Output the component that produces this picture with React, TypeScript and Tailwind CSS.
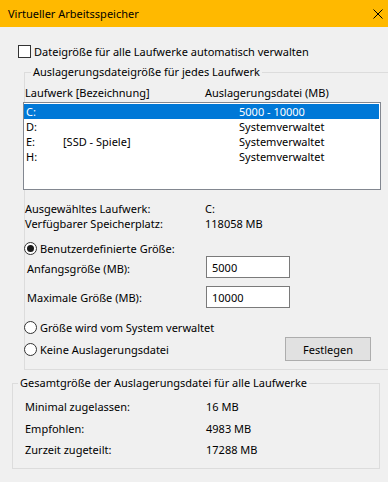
import React from 'react';

const drives = [
  { letter: 'C:', label: '', size: '5000 - 10000', selected: true },
  { letter: 'D:', label: '', size: 'Systemverwaltet', selected: false },
  { letter: 'E:', label: '[SSD - Spiele]', size: 'Systemverwaltet', selected: false },
  { letter: 'H:', label: '', size: 'Systemverwaltet', selected: false },
];

function Radio({ checked }: { checked?: boolean }) {
  return (
    <span className="w-[13px] h-[13px] rounded-full border border-[#333333] bg-white flex items-center justify-center flex-shrink-0">
      {checked && <span className="w-[7px] h-[7px] rounded-full bg-[#1a1a1a]" />}
    </span>
  );
}

export default function App() {
  return (
    <div className="w-[388px] h-[482px] bg-[#f0f0f0] overflow-hidden text-[11px] leading-[15px] text-black font-['Noto_Sans',sans-serif]">
      {/* Title bar */}
      <div className="h-[27px] bg-[#ffb900] flex items-center justify-between pl-[8px] pr-[5px]">
        <span>Virtueller Arbeitsspeicher</span>
        <svg width="10" height="10" viewBox="0 0 10 10">
          <path d="M0.5 0.5 L9.5 9.5 M9.5 0.5 L0.5 9.5" stroke="#000" strokeWidth="1" />
        </svg>
      </div>

      {/* Auto manage */}
      <div className="ml-[18px] mt-[16px] h-[16px] flex items-center">
        <span className="w-[13px] h-[13px] border border-[#333333] bg-white flex-shrink-0" />
        <span className="ml-[3px]">Dateigröße für alle Laufwerke automatisch verwalten</span>
      </div>

      {/* Per drive group */}
      <fieldset className="ml-[24px] mt-[5px] w-[370px] border border-[#dcdcdc] pb-[8px]">
        <legend className="ml-[6px] px-[2px] leading-[16px]">
          Auslagerungsdateigröße für jedes Laufwerk
        </legend>

        <div className="mt-[4px] h-[16px] flex items-center">
          <span className="w-[180px]">Laufwerk [Bezeichnung]</span>
          <span>Auslagerungsdatei (MB)</span>
        </div>

        <div className="mt-[2px] -ml-[2px] w-[358px] h-[88px] border border-[#828790] bg-white pt-[1px]">
          {drives.map((d) => (
            <div
              key={d.letter}
              className={`h-[15px] mr-[1px] pl-[2px] flex items-center ${
                d.selected ? 'bg-[#0078d7] text-white' : ''
              }`}
            >
              <span className="w-[37px]">{d.letter}</span>
              <span className="w-[176px]">{d.label}</span>
              <span>{d.size}</span>
            </div>
          ))}
        </div>

        <div className="mt-[11px] h-[15px] flex items-center">
          <span className="w-[180px]">Ausgewähltes Laufwerk:</span>
          <span>C:</span>
        </div>
        <div className="h-[15px] flex items-center">
          <span className="w-[180px]">Verfügbarer Speicherplatz:</span>
          <span>118058 MB</span>
        </div>

        <div className="mt-[10px] h-[15px] flex items-center -ml-[1px]">
          <Radio checked />
          <span className="ml-[3px]">Benutzerdefinierte Größe:</span>
        </div>

        <div className="h-[22px] flex items-center">
          <span className="w-[181px] pl-[2px] pt-[3px]">Anfangsgröße (MB):</span>
          <div className="w-[84px] h-[22px] border border-[#7a7a7a] bg-white pl-[5px] flex items-center">
            5000
          </div>
        </div>

        <div className="mt-[8px] h-[22px] flex items-center">
          <span className="w-[181px] pl-[2px]">Maximale Größe (MB):</span>
          <div className="w-[84px] h-[22px] border border-[#7a7a7a] bg-white pl-[5px] flex items-center">
            10000
          </div>
        </div>

        <div className="mt-[12px] h-[15px] flex items-center -ml-[1px]">
          <Radio />
          <span className="ml-[3px]">Größe wird vom System verwaltet</span>
        </div>

        <div className="mt-[2px] h-[24px] flex items-center -ml-[1px]">
          <div className="w-[261px] flex items-center">
            <Radio />
            <span className="ml-[3px]">Keine Auslagerungsdatei</span>
          </div>
          <button
            type="button"
            className="w-[86px] h-[24px] bg-[#e1e1e1] border border-[#adadad] flex items-center justify-center"
          >
            Festlegen
          </button>
        </div>
      </fieldset>

      {/* Total group */}
      <fieldset className="ml-[12px] mt-[5px] w-[368px] border border-[#dcdcdc] pb-[11px] pl-[12px]">
        <legend className="ml-[-7px] px-[2px] leading-[16px]">
          Gesamtgröße der Auslagerungsdatei für alle Laufwerke
        </legend>
        <div className="mt-[7px] h-[16px] flex items-center">
          <span className="w-[181px]">Minimal zugelassen:</span>
          <span>16 MB</span>
        </div>
        <div className="mt-[6px] h-[16px] flex items-center">
          <span className="w-[181px]">Empfohlen:</span>
          <span>4983 MB</span>
        </div>
        <div className="mt-[5px] h-[16px] flex items-center">
          <span className="w-[181px]">Zurzeit zugeteilt:</span>
          <span>17288 MB</span>
        </div>
      </fieldset>
    </div>
  );
}
